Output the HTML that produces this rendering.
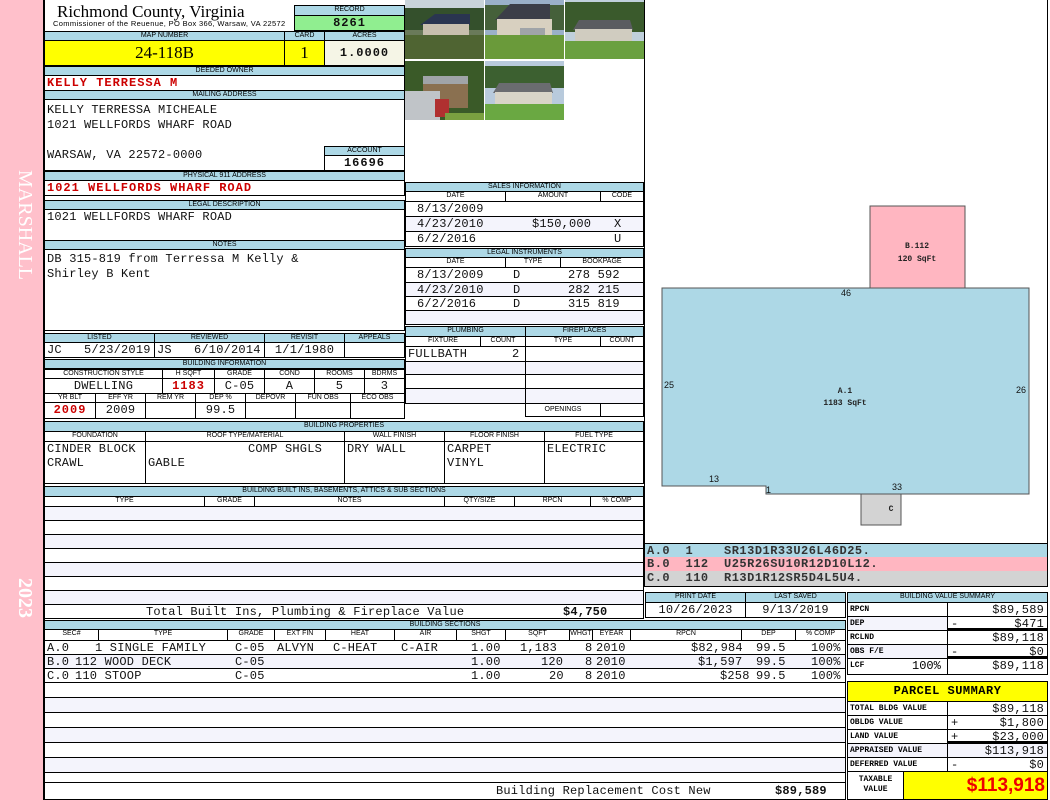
<!DOCTYPE html>
<html><head><meta charset="utf-8"><style>
body{margin:0;width:1050px;height:800px;position:relative;background:#fff;overflow:hidden}
.a{position:absolute;box-sizing:border-box;overflow:hidden;white-space:nowrap}
.h{background:#add8e6;border:1px solid #000;font:7px/8px "Liberation Sans",sans-serif;text-align:center;color:#000}
.w{background:#fff;border:1px solid #000}
.s{background:#f4f4fc;border:1px solid #000}
.m{font:12px/14px "Liberation Mono",monospace;color:#111;letter-spacing:0.2px}
.r{color:#c00;font-weight:bold;letter-spacing:1px}
.c{text-align:center}.rt{text-align:right;padding-right:3px}
.l{padding-left:2px}
.sm{font:bold 8px/13px "Liberation Mono",monospace;padding-left:2px}
</style></head><body>
<div class="a" style="left:0;top:0;width:43px;height:800px;background:#ffc0cb"></div>
<div class="a" style="left:8px;top:170px;width:28px;height:120px;writing-mode:vertical-rl;font:20px 'Liberation Serif',serif;color:#fff">MARSHALL</div>
<div class="a" style="left:8px;top:578px;width:28px;height:50px;writing-mode:vertical-rl;font:bold 20px 'Liberation Serif',serif;color:#fff">2023</div>
<div class="a" style="left:43px;top:0;width:2px;height:800px;background:#000"></div>

<div class="a" style="left:57px;top:2px;font:17px/20px 'Liberation Serif',serif">Richmond County, Virginia</div>
<div class="a" style="left:53px;top:19px;font:7.5px/9px 'Liberation Sans',sans-serif;letter-spacing:0.35px">Commissioner of the Reuenue, PO Box 366, Warsaw, VA 22572</div>
<div class="a h" style="left:294px;top:5px;width:111px;height:11px">RECORD</div>
<div class="a m c" style="left:294px;top:15px;width:111px;height:16px;background:#90ee90;border:1px solid #000;font-weight:bold;letter-spacing:1px">8261</div>

<div class="a h" style="left:44px;top:31px;width:241px;height:10px">MAP NUMBER</div>
<div class="a h" style="left:284px;top:31px;width:41px;height:10px">CARD</div>
<div class="a h" style="left:324px;top:31px;width:81px;height:10px">ACRES</div>
<div class="a c" style="left:44px;top:40px;width:241px;height:26px;background:#ff0;border:1px solid #000;font:17px/24px 'Liberation Serif',serif">24-118B</div>
<div class="a c" style="left:284px;top:40px;width:41px;height:26px;background:#ff0;border:1px solid #000;font:17px/24px 'Liberation Serif',serif">1</div>
<div class="a m c" style="left:324px;top:40px;width:81px;height:26px;background:#f5f5e6;border:1px solid #000;line-height:24px;font-weight:bold;letter-spacing:1px">1.0000</div>

<div class="a h" style="left:44px;top:66px;width:361px;height:10px">DEEDED OWNER</div>
<div class="a w m r l" style="left:44px;top:75px;width:361px;height:16px">KELLY TERRESSA M</div>
<div class="a h" style="left:44px;top:90px;width:361px;height:10px">MAILING ADDRESS</div>
<div class="a w m l" style="left:44px;top:99px;width:361px;height:72px;padding-top:3px;line-height:15px">KELLY TERRESSA MICHEALE<br>1021 WELLFORDS WHARF ROAD<br><br>WARSAW, VA 22572-0000</div>
<div class="a h" style="left:324px;top:146px;width:81px;height:10px">ACCOUNT</div>
<div class="a w m c" style="left:324px;top:155px;width:81px;height:16px;font-weight:bold;letter-spacing:1px;line-height:14px">16696</div>
<div class="a h" style="left:44px;top:171px;width:361px;height:10px">PHYSICAL 911 ADDRESS</div>
<div class="a w m r l" style="left:44px;top:180px;width:361px;height:16px">1021 WELLFORDS WHARF ROAD</div>

<div class="a h" style="left:44px;top:200px;width:361px;height:10px">LEGAL DESCRIPTION</div>
<div class="a w m l" style="left:44px;top:209px;width:361px;height:32px">1021 WELLFORDS WHARF ROAD</div>
<div class="a h" style="left:44px;top:240px;width:361px;height:10px">NOTES</div>
<div class="a w m l" style="left:44px;top:249px;width:361px;height:82px;padding-top:2px;line-height:15px">DB 315-819 from Terressa M Kelly &amp;<br>Shirley B Kent</div>

<div class="a h" style="left:44px;top:333px;width:111px;height:10px">LISTED</div>
<div class="a h" style="left:154px;top:333px;width:111px;height:10px">REVIEWED</div>
<div class="a h" style="left:264px;top:333px;width:81px;height:10px">REVISIT</div>
<div class="a h" style="left:344px;top:333px;width:61px;height:10px">APPEALS</div>
<div class="a w m l" style="left:44px;top:342px;width:111px;height:16px">JC&nbsp;&nbsp;&nbsp;5/23/2019</div>
<div class="a w m l" style="left:154px;top:342px;width:111px;height:16px">JS&nbsp;&nbsp;&nbsp;6/10/2014</div>
<div class="a w m c" style="left:264px;top:342px;width:81px;height:16px">1/1/1980</div>
<div class="a w" style="left:344px;top:342px;width:61px;height:16px"></div>

<div class="a h" style="left:44px;top:359px;width:361px;height:10px">BUILDING INFORMATION</div>
<div class="a w" style="left:44px;top:368px;width:361px;height:51px"></div>
<div class="a h" style="left:44px;top:369px;width:119px;height:10px;background:#fff">CONSTRUCTION STYLE</div>
<div class="a h" style="left:162px;top:369px;width:53px;height:10px;background:#fff">H SQFT</div>
<div class="a h" style="left:214px;top:369px;width:51px;height:10px;background:#fff">GRADE</div>
<div class="a h" style="left:264px;top:369px;width:51px;height:10px;background:#fff">COND</div>
<div class="a h" style="left:314px;top:369px;width:51px;height:10px;background:#fff">ROOMS</div>
<div class="a h" style="left:364px;top:369px;width:41px;height:10px;background:#fff">BDRMS</div>
<div class="a w m c" style="left:44px;top:378px;width:119px;height:16px">DWELLING</div>
<div class="a w m c r" style="left:162px;top:378px;width:53px;height:16px">1183</div>
<div class="a w m c" style="left:214px;top:378px;width:51px;height:16px">C-05</div>
<div class="a w m c" style="left:264px;top:378px;width:51px;height:16px">A</div>
<div class="a w m c" style="left:314px;top:378px;width:51px;height:16px">5</div>
<div class="a w m c" style="left:364px;top:378px;width:41px;height:16px">3</div>
<div class="a h" style="left:44px;top:393px;width:52px;height:10px;background:#fff">YR BLT</div>
<div class="a h" style="left:95px;top:393px;width:51px;height:10px;background:#fff">EFF YR</div>
<div class="a h" style="left:145px;top:393px;width:51px;height:10px;background:#fff">REM YR</div>
<div class="a h" style="left:195px;top:393px;width:51px;height:10px;background:#fff">DEP %</div>
<div class="a h" style="left:245px;top:393px;width:51px;height:10px;background:#fff">DEPOVR</div>
<div class="a h" style="left:295px;top:393px;width:56px;height:10px;background:#fff">FUN OBS</div>
<div class="a h" style="left:350px;top:393px;width:55px;height:10px;background:#fff">ECO OBS</div>
<div class="a w m c r" style="left:44px;top:402px;width:52px;height:17px">2009</div>
<div class="a w m c" style="left:95px;top:402px;width:51px;height:17px">2009</div>
<div class="a w" style="left:145px;top:402px;width:51px;height:17px"></div>
<div class="a w m c" style="left:195px;top:402px;width:51px;height:17px">99.5</div>
<div class="a w" style="left:245px;top:402px;width:51px;height:17px"></div>
<div class="a w" style="left:295px;top:402px;width:56px;height:17px"></div>
<div class="a w" style="left:350px;top:402px;width:55px;height:17px"></div>

<svg class="a" style="left:405px;top:0" width="240" height="121" viewBox="0 0 240 121">
<g><rect x="0" y="0" width="79" height="59" fill="#6a7a5a"/><rect x="0" y="0" width="79" height="18" fill="#c9d4da"/><rect x="0" y="8" width="79" height="22" fill="#34502c"/><polygon points="15,25 30,14 65,14 65,25" fill="#2a3550"/><rect x="18" y="24" width="46" height="11" fill="#c8bfae"/><rect x="0" y="35" width="79" height="24" fill="#4f6432"/></g>
<g transform="translate(80,0)"><rect width="79" height="59" fill="#9ab0c8"/><rect y="5" width="79" height="25" fill="#45603a"/><polygon points="10,20 25,4 65,4 65,20" fill="#3c3e48"/><rect x="12" y="19" width="55" height="16" fill="#d8d0c0"/><rect x="35" y="28" width="25" height="12" fill="#a0a4a8"/><rect y="35" width="79" height="24" fill="#6a9a3a"/></g>
<g transform="translate(160,0)"><rect width="79" height="59" fill="#c0d0dc"/><rect y="2" width="79" height="30" fill="#3a5a2c"/><polygon points="8,30 14,20 65,20 68,30" fill="#5a5c60"/><rect x="10" y="29" width="57" height="12" fill="#d0ccc0"/><rect y="41" width="79" height="18" fill="#6aa040"/></g>
<g transform="translate(0,61)"><rect width="79" height="59" fill="#3a5a28"/><rect x="18" y="17" width="45" height="30" fill="#8a7050"/><rect x="18" y="15" width="45" height="8" fill="#a0a4a8"/><rect x="0" y="30" width="35" height="29" fill="#c0c4c8"/><rect x="30" y="38" width="14" height="18" fill="#b03030"/><rect x="40" y="52" width="39" height="7" fill="#7aa040"/></g>
<g transform="translate(80,61)"><rect width="79" height="59" fill="#b8cadc"/><rect y="5" width="79" height="22" fill="#3c6030"/><polygon points="8,32 14,22 65,22 68,32" fill="#6a6c70"/><rect x="10" y="31" width="57" height="12" fill="#d8d4c8"/><rect y="43" width="79" height="16" fill="#6aa842"/></g>
</svg>

<div class="a h" style="left:405px;top:182px;width:239px;height:10px">SALES INFORMATION</div>
<div class="a h" style="left:405px;top:191px;width:101px;height:11px;background:#fff">DATE</div>
<div class="a h" style="left:505px;top:191px;width:96px;height:11px;background:#fff">AMOUNT</div>
<div class="a h" style="left:600px;top:191px;width:44px;height:11px;background:#fff">CODE</div>
<div class="a w m" style="left:405px;top:201px;width:239px;height:16px;padding-left:11px">8/13/2009</div>
<div class="a s m" style="left:405px;top:216px;width:239px;height:16px;padding-left:11px">4/23/2010<span style="position:absolute;left:126px">$150,000</span><span style="position:absolute;left:208px">X</span></div>
<div class="a w m" style="left:405px;top:231px;width:239px;height:16px;padding-left:11px">6/2/2016<span style="position:absolute;left:208px">U</span></div>
<div class="a h" style="left:405px;top:248px;width:239px;height:10px">LEGAL INSTRUMENTS</div>
<div class="a h" style="left:405px;top:257px;width:101px;height:11px;background:#fff">DATE</div>
<div class="a h" style="left:505px;top:257px;width:56px;height:11px;background:#fff">TYPE</div>
<div class="a h" style="left:560px;top:257px;width:84px;height:11px;background:#fff">BOOKPAGE</div>
<div class="a w m" style="left:405px;top:267px;width:239px;height:16px;padding-left:11px">8/13/2009<span style="position:absolute;left:107px">D</span><span style="position:absolute;left:162px">278 592</span></div>
<div class="a s m" style="left:405px;top:282px;width:239px;height:15px;padding-left:11px">4/23/2010<span style="position:absolute;left:107px">D</span><span style="position:absolute;left:162px">282 215</span></div>
<div class="a w m" style="left:405px;top:296px;width:239px;height:15px;padding-left:11px">6/2/2016<span style="position:absolute;left:107px">D</span><span style="position:absolute;left:162px">315 819</span></div>
<div class="a s" style="left:405px;top:310px;width:239px;height:15px"></div>

<div class="a h" style="left:405px;top:326px;width:121px;height:11px">PLUMBING</div>
<div class="a h" style="left:525px;top:326px;width:119px;height:11px">FIREPLACES</div>
<div class="a h" style="left:405px;top:336px;width:76px;height:11px;background:#fff">FIXTURE</div>
<div class="a h" style="left:480px;top:336px;width:46px;height:11px;background:#fff">COUNT</div>
<div class="a h" style="left:525px;top:336px;width:76px;height:11px;background:#fff">TYPE</div>
<div class="a h" style="left:600px;top:336px;width:44px;height:11px;background:#fff">COUNT</div>
<div class="a w m l" style="left:405px;top:346px;width:121px;height:16px">FULLBATH<span style="position:absolute;left:106px">2</span></div>
<div class="a s" style="left:405px;top:361px;width:121px;height:14px"></div>
<div class="a w" style="left:405px;top:374px;width:121px;height:15px"></div>
<div class="a s" style="left:405px;top:388px;width:121px;height:16px"></div>
<div class="a w" style="left:525px;top:346px;width:119px;height:16px"></div>
<div class="a s" style="left:525px;top:361px;width:119px;height:14px"></div>
<div class="a w" style="left:525px;top:374px;width:119px;height:15px"></div>
<div class="a s" style="left:525px;top:388px;width:119px;height:16px"></div>
<div class="a w" style="left:525px;top:403px;width:76px;height:14px;font:7px/12px 'Liberation Sans',sans-serif;text-align:center">OPENINGS</div>
<div class="a w" style="left:600px;top:403px;width:44px;height:14px"></div>

<div class="a h" style="left:44px;top:421px;width:600px;height:11px">BUILDING PROPERTIES</div>
<div class="a h" style="left:44px;top:431px;width:102px;height:11px;background:#fff">FOUNDATION</div>
<div class="a h" style="left:145px;top:431px;width:200px;height:11px;background:#fff">ROOF TYPE/MATERIAL</div>
<div class="a h" style="left:344px;top:431px;width:101px;height:11px;background:#fff">WALL FINISH</div>
<div class="a h" style="left:444px;top:431px;width:101px;height:11px;background:#fff">FLOOR FINISH</div>
<div class="a h" style="left:544px;top:431px;width:100px;height:11px;background:#fff">FUEL TYPE</div>
<div class="a w m l" style="left:44px;top:441px;width:102px;height:43px">CINDER BLOCK<br>CRAWL</div>
<div class="a w m l" style="left:145px;top:441px;width:200px;height:43px"><span style="padding-left:100px">COMP SHGLS</span><br>GABLE</div>
<div class="a w m l" style="left:344px;top:441px;width:101px;height:43px">DRY WALL</div>
<div class="a w m l" style="left:444px;top:441px;width:101px;height:43px">CARPET<br>VINYL</div>
<div class="a w m l" style="left:544px;top:441px;width:100px;height:43px">ELECTRIC</div>

<div class="a h" style="left:44px;top:486px;width:600px;height:11px">BUILDING BUILT INS, BASEMENTS, ATTICS &amp; SUB SECTIONS</div>
<div class="a h" style="left:44px;top:496px;width:161px;height:11px;background:#fff">TYPE</div>
<div class="a h" style="left:204px;top:496px;width:51px;height:11px;background:#fff">GRADE</div>
<div class="a h" style="left:254px;top:496px;width:191px;height:11px;background:#fff">NOTES</div>
<div class="a h" style="left:444px;top:496px;width:71px;height:11px;background:#fff">QTY/SIZE</div>
<div class="a h" style="left:514px;top:496px;width:77px;height:11px;background:#fff">RPCN</div>
<div class="a h" style="left:590px;top:496px;width:54px;height:11px;background:#fff">% COMP</div>
<div class="a s" style="left:44px;top:506px;width:600px;height:15px"></div>
<div class="a w" style="left:44px;top:520px;width:600px;height:15px"></div>
<div class="a s" style="left:44px;top:534px;width:600px;height:15px"></div>
<div class="a w" style="left:44px;top:548px;width:600px;height:15px"></div>
<div class="a s" style="left:44px;top:562px;width:600px;height:15px"></div>
<div class="a w" style="left:44px;top:576px;width:600px;height:15px"></div>
<div class="a s" style="left:44px;top:590px;width:600px;height:15px"></div>
<div class="a w m" style="left:44px;top:604px;width:600px;height:15px;line-height:14px"><span style="position:absolute;left:101px">Total Built Ins, Plumbing &amp; Fireplace Value</span><span style="position:absolute;left:518px;font-weight:bold">$4,750</span></div>

<div class="a" style="left:644px;top:0;width:404px;height:544px;border:1px solid #000;border-top:none;background:#fff"></div>
<svg class="a" style="left:645px;top:0" width="402" height="543">
<rect x="225" y="206" width="95" height="82" fill="#ffb6c1" stroke="#555"/>
<polygon points="17,288 384,288 384,494 121,494 121,486 17,486" fill="#add8e6" stroke="#555"/>
<rect x="216" y="494" width="40" height="31" fill="#d3d3d3" stroke="#555"/>
<g font-family="Liberation Mono,monospace" font-size="8" font-weight="bold" text-anchor="middle" fill="#222">
<text x="272" y="248">B.112</text><text x="272" y="261">120 SqFt</text>
<text x="200" y="393">A.1</text><text x="200" y="405">1183 SqFt</text>
<text x="246" y="511">C</text></g>
<g font-family="Liberation Sans,sans-serif" font-size="9" fill="#111">
<text x="196" y="296">46</text><text x="19" y="388">25</text><text x="371" y="393">26</text>
<text x="64" y="482">13</text><text x="121" y="493">1</text><text x="247" y="490">33</text></g>
</svg>
<div class="a m" style="left:644px;top:543px;width:404px;height:15px;background:#add8e6;border:1px solid #000;border-bottom:none;padding-left:2px;font-weight:bold;color:#333;letter-spacing:0.5px">A.0&nbsp;&nbsp;1&nbsp;&nbsp;&nbsp;&nbsp;SR13D1R33U26L46D25.</div>
<div class="a m" style="left:644px;top:557px;width:404px;height:15px;background:#ffb6c1;border-left:1px solid #000;border-right:1px solid #000;padding-left:2px;font-weight:bold;color:#333;letter-spacing:0.5px">B.0&nbsp;&nbsp;112&nbsp;&nbsp;U25R26SU10R12D10L12.</div>
<div class="a m" style="left:644px;top:571px;width:404px;height:16px;background:#d3d3d3;border:1px solid #000;border-top:none;padding-left:2px;font-weight:bold;color:#333;letter-spacing:0.5px">C.0&nbsp;&nbsp;110&nbsp;&nbsp;R13D1R12SR5D4L5U4.</div>

<div class="a h" style="left:645px;top:592px;width:101px;height:11px">PRINT DATE</div>
<div class="a h" style="left:745px;top:592px;width:101px;height:11px">LAST SAVED</div>
<div class="a w m c" style="left:645px;top:602px;width:101px;height:16px">10/26/2023</div>
<div class="a w m c" style="left:745px;top:602px;width:101px;height:16px">9/13/2019</div>

<div class="a h" style="left:44px;top:620px;width:802px;height:10px">BUILDING SECTIONS</div>
<div class="a h" style="left:44px;top:629px;width:55px;height:12px;background:#fff">SEC#</div>
<div class="a h" style="left:98px;top:629px;width:130px;height:12px;background:#fff">TYPE</div>
<div class="a h" style="left:227px;top:629px;width:48px;height:12px;background:#fff">GRADE</div>
<div class="a h" style="left:274px;top:629px;width:52px;height:12px;background:#fff">EXT FIN</div>
<div class="a h" style="left:325px;top:629px;width:70px;height:12px;background:#fff">HEAT</div>
<div class="a h" style="left:394px;top:629px;width:63px;height:12px;background:#fff">AIR</div>
<div class="a h" style="left:456px;top:629px;width:50px;height:12px;background:#fff">SHGT</div>
<div class="a h" style="left:505px;top:629px;width:65px;height:12px;background:#fff">SQFT</div>
<div class="a h" style="left:569px;top:629px;width:24px;height:12px;background:#fff">WHGT</div>
<div class="a h" style="left:592px;top:629px;width:39px;height:12px;background:#fff">EYEAR</div>
<div class="a h" style="left:630px;top:629px;width:112px;height:12px;background:#fff">RPCN</div>
<div class="a h" style="left:741px;top:629px;width:55px;height:12px;background:#fff">DEP</div>
<div class="a h" style="left:795px;top:629px;width:51px;height:12px;background:#fff">% COMP</div>
<div class="a w m" style="left:44px;top:640px;width:802px;height:15px;line-height:14px"><span style="position:absolute;left:2px">A.0</span><span style="position:absolute;left:50px">1 SINGLE FAMILY</span><span style="position:absolute;left:190px">C-05</span><span style="position:absolute;left:232px">ALVYN</span><span style="position:absolute;left:288px">C-HEAT</span><span style="position:absolute;left:356px">C-AIR</span><span style="position:absolute;left:426px">1.00</span><span style="position:absolute;left:475px">1,183</span><span style="position:absolute;left:540px">8</span><span style="position:absolute;left:551px">2010</span><span style="position:absolute;left:646px">$82,984</span><span style="position:absolute;left:711px">99.5</span><span style="position:absolute;left:766px">100%</span></div>
<div class="a s m" style="left:44px;top:654px;width:802px;height:15px;line-height:14px"><span style="position:absolute;left:2px">B.0</span><span style="position:absolute;left:30px">112 WOOD DECK</span><span style="position:absolute;left:190px">C-05</span><span style="position:absolute;left:426px">1.00</span><span style="position:absolute;left:496px">120</span><span style="position:absolute;left:540px">8</span><span style="position:absolute;left:551px">2010</span><span style="position:absolute;left:653px">$1,597</span><span style="position:absolute;left:711px">99.5</span><span style="position:absolute;left:766px">100%</span></div>
<div class="a w m" style="left:44px;top:668px;width:802px;height:15px;line-height:14px"><span style="position:absolute;left:2px">C.0</span><span style="position:absolute;left:30px">110 STOOP</span><span style="position:absolute;left:190px">C-05</span><span style="position:absolute;left:426px">1.00</span><span style="position:absolute;left:504px">20</span><span style="position:absolute;left:540px">8</span><span style="position:absolute;left:551px">2010</span><span style="position:absolute;left:675px">$258</span><span style="position:absolute;left:711px">99.5</span><span style="position:absolute;left:766px">100%</span></div>
<div class="a w" style="left:44px;top:682px;width:802px;height:16px"></div>
<div class="a s" style="left:44px;top:697px;width:802px;height:16px"></div>
<div class="a w" style="left:44px;top:712px;width:802px;height:16px"></div>
<div class="a s" style="left:44px;top:727px;width:802px;height:16px"></div>
<div class="a w" style="left:44px;top:742px;width:802px;height:16px"></div>
<div class="a s" style="left:44px;top:757px;width:802px;height:16px"></div>
<div class="a w" style="left:44px;top:772px;width:802px;height:16px"></div>
<div class="a w m" style="left:44px;top:782px;width:802px;height:18px;line-height:17px"><span style="position:absolute;left:451px">Building Replacement Cost New</span><span style="position:absolute;left:730px;font-weight:bold">$89,589</span></div>

<div class="a h" style="left:847px;top:592px;width:201px;height:11px">BUILDING VALUE SUMMARY</div>
<div class="a w sm" style="left:847px;top:602px;width:101px;height:15px">RPCN</div>
<div class="a w m rt" style="left:947px;top:602px;width:101px;height:15px">$89,589</div>
<div class="a s sm" style="left:847px;top:616px;width:101px;height:15px">DEP</div>
<div class="a w m rt" style="left:947px;top:616px;width:101px;height:15px;border-bottom:3px solid #000"><span style="position:absolute;left:3px">-</span>$471</div>
<div class="a w sm" style="left:847px;top:630px;width:101px;height:15px">RCLND</div>
<div class="a w m rt" style="left:947px;top:630px;width:101px;height:15px">$89,118</div>
<div class="a s sm" style="left:847px;top:644px;width:101px;height:15px">OBS F/E</div>
<div class="a w m rt" style="left:947px;top:644px;width:101px;height:15px;border-bottom:3px solid #000"><span style="position:absolute;left:3px">-</span>$0</div>
<div class="a w sm" style="left:847px;top:658px;width:101px;height:17px">LCF<span style="position:absolute;left:64px;font:12px/15px 'Liberation Mono'">100%</span></div>
<div class="a w m rt" style="left:947px;top:658px;width:101px;height:17px">$89,118</div>

<div class="a c" style="left:847px;top:681px;width:201px;height:21px;background:#ff0;border:1px solid #000;font:bold 12px/19px 'Liberation Mono',monospace;letter-spacing:0.5px">PARCEL SUMMARY</div>
<div class="a w sm" style="left:847px;top:701px;width:101px;height:15px">TOTAL BLDG VALUE</div>
<div class="a w m rt" style="left:947px;top:701px;width:101px;height:15px">$89,118</div>
<div class="a w sm" style="left:847px;top:715px;width:101px;height:15px">OBLDG VALUE</div>
<div class="a w m rt" style="left:947px;top:715px;width:101px;height:15px"><span style="position:absolute;left:3px">+</span>$1,800</div>
<div class="a w sm" style="left:847px;top:729px;width:101px;height:15px">LAND VALUE</div>
<div class="a w m rt" style="left:947px;top:729px;width:101px;height:15px;border-bottom:3px solid #000"><span style="position:absolute;left:3px">+</span>$23,000</div>
<div class="a s sm" style="left:847px;top:743px;width:101px;height:15px">APPRAISED VALUE</div>
<div class="a s m rt" style="left:947px;top:743px;width:101px;height:15px">$113,918</div>
<div class="a w sm" style="left:847px;top:757px;width:101px;height:15px">DEFERRED VALUE</div>
<div class="a w m rt" style="left:947px;top:757px;width:101px;height:15px"><span style="position:absolute;left:3px">-</span>$0</div>
<div class="a w c" style="left:847px;top:771px;width:57px;height:29px;font:bold 8px/10px 'Liberation Mono',monospace;padding-top:3px">TAXABLE<br>VALUE</div>
<div class="a" style="left:903px;top:771px;width:145px;height:29px;background:#ff0;border:1px solid #000;text-align:right;padding-right:2px;font:bold 19px/27px 'Liberation Sans',sans-serif;color:#e00">$113,918</div>
</body></html>
